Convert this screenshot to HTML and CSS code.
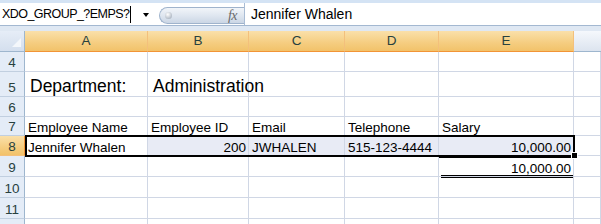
FILE: index.html
```html
<!DOCTYPE html>
<html>
<head>
<meta charset="utf-8">
<link rel="stylesheet" href="styles.css">
</head>
<body>
<div class="top"></div>
<div class="fbar">
  <div class="namebox"><span class="nb-text">XDO_GROUP_?EMPS?</span><span class="caret"></span><span class="dd"></span></div>
  <div class="pill"><span class="dot"></span><span class="fx">fx</span></div>
  <div class="finput">Jennifer Whalen</div>
</div>
<div class="gap"></div>
<div class="sheet">
  <div class="corner"></div><div class="ch">A</div><div class="ch">B</div><div class="ch">C</div><div class="ch">D</div><div class="ch">E</div><div class="chf"></div>

  <div class="rh">4</div><div class="c"></div><div class="c"></div><div class="c"></div><div class="c"></div><div class="c"></div><div class="c"></div>

  <div class="rh">5</div><div class="c big">Department:</div><div class="c big">Administration</div><div class="c"></div><div class="c"></div><div class="c"></div><div class="c"></div>

  <div class="rh">6</div><div class="c"></div><div class="c"></div><div class="c"></div><div class="c"></div><div class="c"></div><div class="c"></div>

  <div class="rh">7</div><div class="c">Employee Name</div><div class="c">Employee ID</div><div class="c">Email</div><div class="c">Telephone</div><div class="c">Salary</div><div class="c"></div>

  <div class="rh sel">8</div><div class="c active">Jennifer Whalen<span class="selbox"><span class="handle"></span></span></div><div class="c hl right">200</div><div class="c hl">JWHALEN</div><div class="c hl">515-123-4444</div><div class="c hl right">10,000.00</div><div class="c"></div>

  <div class="rh">9</div><div class="c"></div><div class="c"></div><div class="c"></div><div class="c"></div><div class="c right total">10,000.00</div><div class="c"></div>

  <div class="rh">10</div><div class="c"></div><div class="c"></div><div class="c"></div><div class="c"></div><div class="c"></div><div class="c"></div>

  <div class="rh">11</div><div class="c"></div><div class="c"></div><div class="c"></div><div class="c"></div><div class="c"></div><div class="c"></div>

  <div class="rh"></div><div class="c"></div><div class="c"></div><div class="c"></div><div class="c"></div><div class="c"></div><div class="c"></div>
</div>
</body>
</html>
```
FILE: styles.css
```css
html, body {
  margin: 0;
  padding: 0;
}
body {
  width: 601px;
  height: 224px;
  overflow: hidden;
  background: #fff;
  font-family: "Liberation Sans", Arial, sans-serif;
  color: #000;
}
.top {
  height: 3px;
  background: #d4e3f4;
}
.fbar {
  display: flex;
  height: 22px;
  background: #fff;
  border-bottom: 1px solid #a3b8d1;
}
.namebox {
  width: 155px;
  padding-left: 2px;
  display: flex;
  align-items: center;
  font-size: 12.5px;
  letter-spacing: -0.55px;
}
.nb-text {
  line-height: 22px;
}
.caret {
  display: inline-block;
  width: 1px;
  height: 17px;
  margin-left: 1px;
  background: #000;
}
.dd {
  width: 0;
  height: 0;
  margin-left: 12px;
  margin-top: 2px;
  border-left: 3.5px solid transparent;
  border-right: 3.5px solid transparent;
  border-top: 4px solid #000;
}
.pill {
  width: 85px;
  height: 17px;
  margin-left: 2px;
  align-self: center;
  margin-top: 3px;
  border: 1px solid #9fb3cc;
  border-right: none;
  border-radius: 9px 0 0 9px;
  background: linear-gradient(#f2f5f9, #dde5ef 55%, #cbd6e5);
  display: flex;
  align-items: center;
  justify-content: space-between;
  padding: 0 7px 0 5px;
  box-sizing: border-box;
}
.dot {
  width: 7px;
  height: 7px;
  border-radius: 50%;
  background: radial-gradient(circle at 40% 35%, #ffffff, #b3bcc7 70%, #9aa4b0);
}
.fx {
  font-family: "Liberation Serif", "Times New Roman", serif;
  font-style: italic;
  font-size: 14px;
  color: #6a6a6a;
  letter-spacing: -0.5px;
}
.finput {
  flex: 1;
  border-left: 1px solid #a9bcd4;
  padding-left: 6px;
  font-size: 14px;
  line-height: 22px;
}
.gap {
  height: 5px;
  background: #dfe8f3;
}
.sheet {
  display: grid;
  grid-template-columns: 25px 123px 101px 96px 94px 135px 27px;
  grid-template-rows: 21px 20px 25px 20px 19px 20px 21px 21px 21px 20px;
  font-size: 13.5px;
}
.sheet > div {
  box-sizing: border-box;
}
.corner {
  background: linear-gradient(#e6edf7, #d4dfee);
  border-right: 1px solid #9eb6ce;
  border-bottom: 1px solid #9eb6ce;
  position: relative;
}
.corner::after {
  content: "";
  position: absolute;
  right: 3px;
  bottom: 4px;
  width: 0;
  height: 0;
  border-left: 9px solid transparent;
  border-bottom: 9px solid #f4f7fb;
}
.ch {
  background: linear-gradient(#fae0aa, #f5cd80 60%, #f2c26a);
  border-right: 1px solid #f3c07c;
  border-bottom: 1px solid #f29436;
  display: flex;
  align-items: center;
  justify-content: center;
  color: #27413e;
  line-height: 20px;
}
.chf {
  background: linear-gradient(#f5f8fc, #dce4ef);
  border-bottom: 1px solid #9eb6ce;
}
.rh {
  background: #e4ecf7;
  border-right: 1px solid #9eb6ce;
  border-bottom: 1px solid #c1cfe0;
  display: flex;
  align-items: flex-end;
  justify-content: center;
  line-height: 16px;
  color: #27413e;
}
.rh.sel {
  background: linear-gradient(#fae0aa, #f5cd80 60%, #f2c26a);
  border-right: 1px solid #f29436;
  border-bottom: 1px solid #f3c07c;
}
.c {
  border-right: 1px solid #d0d7e5;
  border-bottom: 1px solid #d0d7e5;
  display: flex;
  align-items: flex-end;
  padding: 0 3px;
  line-height: 15px;
  white-space: nowrap;
}
.c.big {
  font-size: 17.5px;
  line-height: 20px;
  padding-left: 5px;
}
.c.right {
  justify-content: flex-end;
  padding-right: 2px;
}
.c.hl {
  background: #e8ebf5;
}
.c.active {
  position: relative;
  background: #fff;
}
.selbox {
  position: absolute;
  left: 0;
  top: -1px;
  width: 550px;
  height: 22px;
  box-sizing: border-box;
  border: 2px solid #000;
  z-index: 2;
}
.handle {
  position: absolute;
  right: -4px;
  bottom: -3px;
  width: 5px;
  height: 5px;
  background: #000;
  box-shadow: 0 0 0 1px #fff;
}
.c.total {
  position: relative;
}
.c.total::before {
  content: "";
  position: absolute;
  left: 0;
  right: 0;
  top: 1px;
  height: 1px;
  background: #000;
}
.c.total::after {
  content: "";
  position: absolute;
  left: 2px;
  right: 0;
  top: 19px;
  height: 1px;
  border-top: 1px solid #000;
  border-bottom: 1px solid #000;
}
```
